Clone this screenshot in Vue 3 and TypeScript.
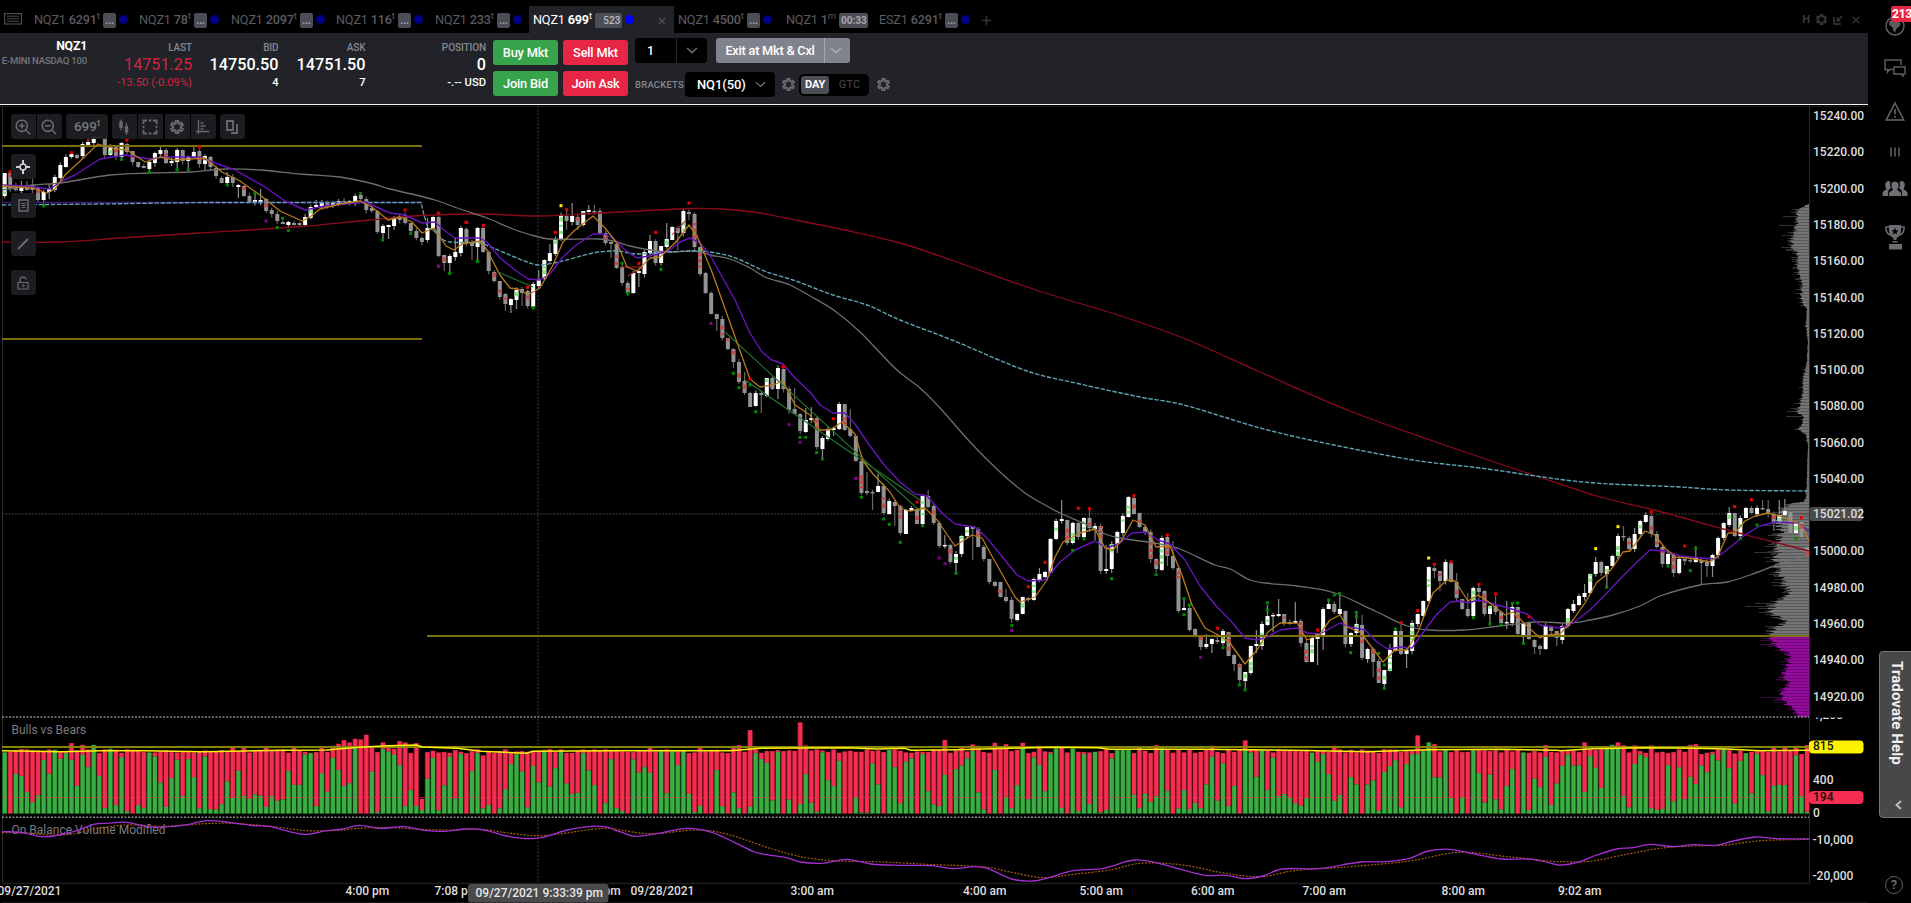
<script setup lang="ts">
type Pt = [number, number]
type Origin = { ox: number; oy: number; sx: number; sy: number }

const STEP = 5.563
const X0 = 4.7
const BASE = 813.5
const xAt = (i: number) => X0 + i * STEP

let seed = 20210928
const rnd = () => {
  seed = (seed * 1664525 + 1013904223) % 4294967296
  return seed / 4294967296
}

/* ---- tabs ---- */
interface Tab { sym: string; size: string; unit: string; badge: string; dot: boolean; width: number; active?: boolean }
const tabs: Tab[] = [
  { sym: 'NQZ1', size: '6291', unit: 't', badge: '...', dot: true, width: 105 },
  { sym: 'NQZ1', size: '78', unit: 't', badge: '...', dot: true, width: 92 },
  { sym: 'NQZ1', size: '2097', unit: 't', badge: '...', dot: true, width: 105 },
  { sym: 'NQZ1', size: '116', unit: 't', badge: '...', dot: true, width: 99 },
  { sym: 'NQZ1', size: '233', unit: 't', badge: '...', dot: true, width: 98 },
  { sym: 'NQZ1', size: '699', unit: 't', badge: '523', dot: true, width: 145, active: true },
  { sym: 'NQZ1', size: '4500', unit: 't', badge: '...', dot: true, width: 108 },
  { sym: 'NQZ1', size: '1', unit: 'm', badge: '00:33', dot: false, width: 93 },
  { sym: 'ESZ1', size: '6291', unit: 't', badge: '...', dot: true, width: 102 },
]

/* ---- candles: colour, body top . body bottom, ^high, _low ---- */
const candleText = `
w173.196 g173.189 g185.190 w187.191^181_193 g185.190^181 g185.190^175 g188.200_203 w192.200_205 w188.192^184_199 w177.190
w165.178 w157.167 w154.157 g155.158 w144.156 w142.146^139 w136.143 g136.138 g138.155 w146.155
g147.156 w143.157 g144.152 g151.162 g162.167 g166.168 w162.169_171 w153.163 w150.154^145 g150.163
w161.163^158_166 w150.162_168 g150.161 w157.161_168 w152.157^147 g151.164 w156.164_171 g157.167 g168.176 g178.183
w177.183^172_185 g177.183_187 w185.187_198 g186.196 g196.202 w200.202^193 w200.202^189 g199.211 g210.214 g214.221
g222.224 w222.225 g223.225 g223.225 w217.225 w207.218 w205.207^200 w203.207^200 g203.207 w203.206
w201.204^199 g201.203 w201.203 w196.202 g195.199 g199.210 g208.211 g211.232 w226.233_240 w225.227_239
w217.226 g216.220 g215.223 g223.231_234 g231.238 g238.242 w228.240^218 w217.229 g217.256 g255.263_271
w256.263_272 w252.257^237 w228.253 g229.243 g242.246_260 w228.247_260 g228.252 g252.271 g272.281 g281.297
g294.304_311 w299.305_313 w290.300_309 g289.293_306 g291.306 w284.307 w279.286^270 w260.279 w253.261^244 w239.254
w215.240 g216.221^210_230 w216.222^203 g217.225_230 w211.225 w210.212^205 g211.212^205 g211.233 g233.243 g242.244_258
g244.268 g267.283 g283.293 w273.293 w271.273_287 w252.274 w241.253^235 g241.263 w246.263 w239.247^223
w227.240 g228.233_250 w211.233 g212.214_220 g214.247 g247.274 g273.293 g293.314 g314.319_331 g319.338
g338.349 g349.362_368 g362.382 g381.393^372 g393.407 w393.406 g393.395_413 w378.396 g378.389 w368.389_399
g369.389 g389.410 g409.414^388 g414.431 w420.432^408 w418.420^407 g418.447 w438.449_459 w429.439 w428.430_436
w404.429 g404.430 g429.436^409 g436.461 g461.493 g491.493^472 g492.493_510 w486.492^474 g486.513 w501.514
g502.506_526 g506.533 w510.534 w508.511 g509.524 w496.524 g496.507^490 g506.523 g523.546 w545.546^535
g545.562 w554.563_572 w536.554 w527.536 g527.529_560 g529.547 g547.559 g559.582 g582.586 g582.597
g597.601^589 g600.619 w614.620 w597.614 g598.600 w579.600 w574.581^568 w572.577 w539.573 w521.539
w519.521^500 g520.543 w523.543 g523.537 w518.537 g518.528^510 w526.529_540 g526.571 w569.571^545 w544.569
w532.544_553 w516.533 w497.517 g498.514 g513.527 g527.532 g532.559 g559.569 w538.570 g537.556_566
g556.568^541 g568.611 w608.610^598 g608.630 g629.636 g636.647 w644.647^634 w639.644_653 g640.642^634 w631.643
g632.656 g655.664_671 g664.680 w672.681_689 w646.673 w644.646^630_653 w624.646 w616.625^605 w615.616_632 w614.616^599
g614.623 g622.624 w621.623^602 g621.643 g643.662 w638.662 w634.639_665 w609.636_650 w604.609^600 g604.612
w609.614^593 g611.644 w633.644 w624.633^612 g625.658^615 w649.659 g649.662_677 g661.683 w670.684_688 w650.671^644
w631.651 g631.654^624 w650.654_668 w623.651 w614.624 w601.616 w567.601 g568.571_578 g571.581_591 w562.581
g563.582 g582.598^573 g599.609 g609.616^593 w588.616 g588.592_602 g591.614 w606.614_623 g606.612^596 g612.623
w622.623^601_629 w607.623 g607.634 w623.635_643 g623.639 g640.647_654 g646.649_655 w626.649 g626.631 g631.638_646
w626.640_644 w609.626 w604.611^600 w596.605 w593.597^584 w574.593 w562.574^557 g562.573 w566.574_587 w556.566
w536.556 g536.537^526_541 g538.549 w534.549^528 w521.534 w515.522 g516.534 g534.547 g547.564 w554.564
g554.573_577 w559.573 g559.561_565 g560.561 w557.562^546 g560.563_585 g562.566_577 w555.566_577 w538.555 w523.538
w513.525^507 g513.536 w518.536 w508.518 g508.513 w508.514 g508.509^500 g509.514^500 g514.523_531 w515.523^500
w511.515^499 g512.533 w523.533 g522.537_544 g547.557`

const candles = candleText.trim().split(/\s+/).map((t, i) => {
  const m = t.match(/^([wg])(\d+)\.(\d+)(?:\^(\d+))?(?:_(\d+))?$/)!
  const top = +m[2]
  const bot = +m[3]
  const up = m[1] === 'w'
  const high = m[4] ? +m[4] : top - rnd() * 3
  const low = m[5] ? +m[5] : bot + rnd() * 4
  const tints: { y: number; h: number }[] = []
  if (bot - top > 7 && rnd() < 0.5) {
    const n = bot - top > 18 ? 2 + Math.round(rnd()) : 1
    let y = top + rnd() * (bot - top) * 0.6
    for (let k = 0; k < n; k++) {
      const h = 2 + rnd() * 2.5
      if (y + h < bot) tints.push({ y, h })
      y += h + 1 + rnd() * 3
    }
  }
  return { x: xAt(i), top, h: Math.max(1.4, bot - top), high, low, up, tints }
})

/* ---- bulls vs bears ---- */
const bulls = [
  183,0,119,113,65,34,55,161,119,191, 164,181,161,83,176,139,206,113,16,194, 25,169,7,0,25,16,183,171,93,20,
  106,161,53,163,109,15,171,13,12,28, 96,47,128,53,44,57,53,20,53,38, 42,127,86,86,176,181,22,121,65,167,
  130,83,91,196,0,0,126,4,193,186, 176,145,22,70,22,10,104,167,9,84, 170,45,178,0,127,181,15,26,0,15,
  73,148,178,126,18,143,93,188,81,136, 186,90,59,62,181,129,85,0,31,163, 16,7,0,162,123,139,122,0,187,61,
  187,145,190,59,4,23,0,0,130,22, 0,63,16,0,20,181,163,152,39,185, 0,42,0,28,118,32,5,183,100,82,
  158,0,0,49,3,2,150,87,0,190, 139,31,155,165,0,178,67,27,22,116, 0,133,144,165,188,63,12,0,131,0,
  50,16,85,196,43,168,146,67,180,195, 17,0,195,7,178,28,185,3,10,165, 190,190,190,56,16,59,35,52,195,68,
  0,15,70,14,32,16,87,170,38,150, 22,83,0,193,183,110,190,70,168,52, 58,49,31,23,46,182,155,178,118,38,
  56,0,109,87,0,87,99,8,125,142, 160,18,148,178,178,187,213,108,108,190, 47,0,49,0,190,121,33,117,42,12,
  82,133,0,183,11,105,79,170,26,90, 143,177,144,144,65,172,137,77,198,206, 202,53,18,149,177,169,16,11,13,145,
  36,138,43,110,88,144,124,178,159,193, 136,30,158,181,60,179,115,6,83,86, 85,0,174,52,5,
]
const totals: Record<number, number> = {
  12: 211, 14: 206, 41: 201, 43: 201, 47: 199, 52: 201, 57: 198, 59: 203, 60: 209, 61: 220, 62: 213, 63: 224, 64: 222,
  65: 236, 66: 198, 68: 213, 69: 201, 70: 194, 71: 217, 72: 213, 74: 211, 75: 44, 86: 174, 116: 200, 125: 200, 131: 200,
  132: 205, 134: 250, 143: 273, 144: 204, 169: 220, 172: 200, 174: 207, 175: 203, 178: 212, 180: 208, 183: 212, 186: 203,
  190: 201, 204: 200, 207: 205, 217: 203, 223: 219, 239: 203, 254: 234, 257: 208, 277: 205, 284: 213, 290: 213, 291: 205,
  293: 204, 296: 204, 300: 184, 303: 206, 304: 208, 305: 178, 306: 182, 311: 180, 316: 187, 317: 185, 318: 200, 320: 199,
  321: 190, 322: 200, 323: 178, 324: 205,
}
const bars = bulls.map((g, i) => {
  const t = totals[i] ?? Math.max(g, 181 + Math.round(rnd() * 12))
  return { x: xAt(i), green: g / 3, total: Math.max(g, t) / 3 }
})

/* ---- volume profile ---- */
const envelope: Pt[] = [
  [203, 0], [206, 5], [210, 11], [218, 12], [225, 13], [235, 15], [240, 18], [247, 18], [252, 13], [258, 11], [265, 13],
  [275, 9], [285, 7], [295, 8], [303, 7], [308, 2], [325, 3], [340, 1], [360, 2], [372, 4], [378, 6], [390, 6], [400, 8],
  [408, 10], [411, 13], [416, 6], [422, 6], [429, 10], [434, 3], [445, 1], [478, 2], [498, 3], [501, 6], [504, 22],
  [515, 31], [530, 29], [540, 31], [552, 33], [562, 34], [568, 33], [576, 29], [585, 25], [592, 19], [597, 28], [607, 40],
  [615, 34], [621, 21], [627, 34], [635, 43], [640, 38], [647, 31], [652, 22], [662, 21], [668, 23], [676, 28], [682, 22],
  [690, 24], [697, 32], [703, 24], [710, 16], [717, 10],
]
const spikes: Record<number, number> = { 216: 26, 225: 30, 247: 28, 411: 22, 416: 23, 552: 55, 603: 54, 606: 64, 644: 49, 697: 49 }
const widthAt = (y: number) => {
  for (let k = 1; k < envelope.length; k++) {
    if (y <= envelope[k][0]) {
      const [y0, w0] = envelope[k - 1]
      const [y1, w1] = envelope[k]
      return w0 + ((w1 - w0) * (y - y0)) / (y1 - y0)
    }
  }
  return 8
}
const profile = Array.from({ length: 514 }, (_, k) => {
  const y = 203 + k
  const w = widthAt(y) * (0.82 + rnd() * 0.3)
  const faint = spikes[y] ?? w + rnd() * rnd() * 14 * Math.min(1, w / 16)
  return { y, w, faint, dark: k % 3 === 1, purple: y >= 637 }
})

/* ---- lines ---- */
const P = (s: string): Pt[] => s.trim().split(/\s+/).map(p => p.split(',').map(Number) as Pt)
const place = (s: string, o: Origin): string => P(s).map(([x, y]) => `${(o.ox + x / o.sx).toFixed(1)},${(o.oy + y / o.sy).toFixed(1)}`).join(' ')
const smooth = (s: string): string => {
  const p = P(s)
  let d = `M${p[0][0]} ${p[0][1]}`
  const slope = (i: number) => {
    const a = p[Math.max(0, i - 1)]
    const b = p[Math.min(p.length - 1, i + 1)]
    return (b[1] - a[1]) / (b[0] - a[0])
  }
  for (let i = 0; i < p.length - 1; i++) {
    const [x0, y0] = p[i]
    const [x1, y1] = p[i + 1]
    const h = (x1 - x0) / 3
    d += `C${(x0 + h).toFixed(1)} ${(y0 + slope(i) * h).toFixed(1)} ${(x1 - h).toFixed(1)} ${(y1 - slope(i + 1) * h).toFixed(1)} ${x1} ${y1}`
  }
  return d
}
const LEFT: Origin = { ox: 0, oy: 700, sx: 2.45, sy: 3 }
const MID: Origin = { ox: 620, oy: 705, sx: 1.6333, sy: 3 }
const RIGHT: Origin = { ox: 1560, oy: 640, sx: 3, sy: 3 }

const redMa = smooth('2,242 60,242 120,238 200,233 300,226.5 370,220 420,215.5 480,214 540,216 600,213 640,211 690,208.5 720,209 760,213 800,221 840,229 900,243 951,260 1036,290 1121,316 1188,340 1260,372 1350,411 1430,440 1533,475 1600,497 1650,509 1680,517 1727,530 1770,541 1809,551')
const vwapLeft = '2,205 100,204 200,202.5 421,202.5 424,215 428,228'
const vwap = smooth('428,228 433,230 442,239 450,242 480,243 493,248 517,258 530,263 540,265 563,261 593,253 617,251 637,254 667,252 697,251 710,252 733,257 767,272 793,280 833,295 867,305 900,320 952,340 1027,371 1080,384 1140,397 1180,404 1227,418 1260,428 1310,440 1413,460 1480,468 1583,482 1680,487 1727,490 1809,491')
const greyMa = smooth('2,190 20,187 33,185 60,183 110,175 150,173 190,172 225,169 260,170 300,174 340,177 370,183 390,189 420,196 435,200 460,209 487,218 513,229 535,236 550,239 600,239 613,241 630,246 650,250 670,252 695,251 710,255 730,259 750,268 765,277 790,285 810,296 835,311 860,332 897,370 920,388 940,408 970,442 1000,472 1025,493 1045,505 1060,513 1085,524 1105,534 1120,538 1160,544 1180,549 1215,565 1230,569 1250,580 1265,583 1297,586 1335,593 1375,611 1407,626 1430,630 1463,630 1500,626 1537,622 1570,623 1590,620 1613,615 1640,606 1660,596 1700,585 1727,582 1750,575 1785,562 1809,556')
const purpleMa = '2,185 25,186 50,189 62,181 75,175 100,159 125,155 150,159 163,157 200,157 215,163 235,170 265,187 285,201 305,210 325,206 365,202 390,213 405,215 422,223 435,222 445,231 455,238 480,238 487,242 500,258 515,270 528,279 540,280 550,274 563,257 575,246 593,234 605,234 615,240 625,250 637,258 655,255 670,250 680,242 690,238 700,243 710,255 735,300 750,333 762,352 772,360 783,364 795,378 810,392 820,405 833,413 845,413 855,424 870,446 885,466 900,482 915,494 927,496 943,514 955,524 975,527 987,538 1000,554 1017,575 1028,581 1045,580 1060,562 1075,550 1095,541 1107,548 1120,543 1132,533 1145,532 1158,540 1170,544 1185,560 1200,586 1217,607 1230,620 1245,638 1257,640 1267,637 1280,630 1297,628 1307,633 1320,634 1340,623 1350,627 1365,630 1378,643 1388,649 1400,647 1412,648 1425,630 1437,614 1450,602 1460,601 1468,603 1478,600 1490,603 1505,607 1515,610 1527,614 1540,625 1560,628 1573,623 1590,610 1605,595 1623,576 1637,562 1650,550 1665,551 1680,556 1690,557 1715,559 1733,545 1745,535 1760,526 1775,522 1797,523 1809,531'
const orangeMa = '2,186 33,188 47,193 55,189 65,175 78,163 98,144 115,149 127,150 145,162 160,157 175,160 205,158 222,172 240,181 260,195 280,211 302,221 310,217 320,209 340,204 360,201 372,207 388,220 400,217 412,222 422,233 434,228 446,246 454,250 462,244 480,241 487,250 500,275 510,288 518,289 528,295 540,288 553,265 563,242 575,230 593,216 605,228 617,243 627,267 637,271 650,258 660,257 675,243 689,225 697,236 712,272 750,379 760,387 773,385 783,381 795,405 810,415 820,430 830,430 842,422 855,434 863,461 873,474 890,492 900,508 910,511 925,508 937,520 955,546 972,535 982,538 993,558 1015,597 1020,602 1035,597 1047,580 1055,557 1063,542 1080,533 1095,529 1105,548 1113,550 1122,540 1133,520 1145,525 1156,547 1170,546 1182,575 1192,605 1205,628 1220,636 1230,643 1245,664 1257,650 1268,632 1280,623 1297,623 1307,640 1320,634 1330,620 1340,615 1347,627 1360,632 1370,645 1383,662 1395,650 1407,650 1418,632 1433,593 1447,580 1455,581 1468,601 1478,595 1490,603 1505,615 1513,612 1527,626 1540,638 1547,635 1560,634 1573,620 1585,603 1597,582 1605,576 1613,567 1623,552 1630,551 1645,531 1655,535 1665,548 1675,557 1688,558 1700,560 1710,562 1718,556 1728,533 1735,533 1745,521 1755,516 1768,513 1780,516 1790,520 1797,523 1803,528 1809,541'

const obv = smooth([
  place('5,395 50,397 100,410 130,408 180,395 230,373 260,370 310,367 370,381 440,377 510,362 560,367 620,377 660,379 700,392 750,403 800,392 840,387 880,376 930,385 990,380 1040,391 1090,394 1140,387 1190,391 1240,408 1300,416 1340,409 1390,390 1450,379 1490,382 1510,392', LEFT),
  place('0,380 25,394 60,386 110,370 150,382 190,415 220,441 250,452 270,457 295,471 330,475 370,463 410,477 460,481 510,482 545,491 580,485 600,490 640,522 675,528 700,518 740,497 790,490 840,465 880,475 910,490 955,511 990,511 1020,521 1050,513 1080,492 1140,491 1210,471 1250,470 1290,460 1320,438 1355,433 1390,445 1440,462 1490,463 1532,480', MID),
  place('0,675 30,672 60,665 110,645 170,627 220,623 270,613 340,620 400,614 470,616 520,603 590,591 650,596 748,597', RIGHT),
].join(' '))
const obvAvg = smooth([
  place('5,398 60,398 120,405 180,402 240,385 310,375 400,379 500,371 560,370 620,374 680,381 750,392 830,391 890,384 960,383 1030,388 1100,390 1180,388 1240,398 1310,407 1370,402 1450,388 1500,385', LEFT),
  place('0,375 50,386 130,375 180,390 250,433 300,457 350,467 430,471 500,478 600,487 640,502 690,518 740,508 800,495 850,475 920,480 980,502 1045,515 1100,497 1180,487 1290,468 1370,442 1450,455 1528,470', MID),
  place('0,665 90,664 200,643 300,625 400,618 490,616 600,602 748,598', RIGHT),
].join(' '))
const volAvg = [
  place('5,152 150,155 250,152 350,152 500,155 600,153 700,151 800,150 880,142 950,137 1020,135 1035,141 1120,145 1180,154 1290,160 1305,154 1510,152', LEFT),
  place('0,137 180,137 230,130 370,128 420,132 465,130 475,136 550,134 700,127 780,128 800,133 950,133 1100,136 1220,140 1320,134 1440,133 1530,136', MID),
  place('0,332 100,326 250,323 400,325 500,327 600,332 748,331', RIGHT),
].join(' ')

/* ---- signal dots, stored per region in third-pixel units ---- */
const dotSets: { ox: number; oy: number; color: string; pts: string }[] = [
  { ox: 0, oy: 105, color: '#e00000', pts: '30,200 215,143 265,103 381,106 598,126 1215,315 1315,324 1398,352' },
  { ox: 0, oy: 105, color: '#008a00', pts: '131,303 365,163 448,202 531,194 565,194 682,240 832,368 865,377 1082,265 1148,405 1232,386 1348,505 1432,470 765,265 848,340' },
  { ox: 0, oy: 105, color: '#80008a', pts: '798,348 1315,483' },
  { ox: 0, oy: 105, color: '#5c5400', pts: '248,88' },
  { ox: 420, oy: 180, color: '#f00000', pts: '140,127 190,136 323,322 406,157 440,89 657,250 707,157 807,69 990,597 1090,560 1240,716' },
  { ox: 420, oy: 180, color: '#008a00', pts: '90,279 173,244 340,383 623,340 606,250 723,268 940,580 957,623 1007,695 990,615 1140,772 1157,772 1190,818 1207,837' },
  { ox: 420, oy: 180, color: '#80008a', pts: '56,259 873,430 1107,734 1140,787 1307,895' },
  { ox: 420, oy: 180, color: '#ffee00', pts: '423,77' },
  { ox: 780, oy: 340, color: '#f00000', pts: '411,486 745,740 795,667 895,505 928,506 1062,467 1162,585 1312,865' },
  { ox: 780, oy: 340, color: '#008a00', pts: '244,472 311,537 328,553 361,607 428,557 528,700 695,857 878,631 912,597 995,716 1128,704 1212,776 1228,795 1212,824 1329,923 1378,1035 1395,1050' },
  { ox: 780, oy: 340, color: '#80008a', pts: '228,415 478,654 495,671 695,871 1262,952' },
  { ox: 1200, oy: 440, color: '#f00000', pts: '352,570 603,548 653,512 703,373 753,366 837,433 887,462 987,530 1354,216' },
  { ox: 1200, oy: 440, color: '#008a00', pts: '202,488 202,510 386,480 403,465 419,460 452,638 469,517 469,530 586,567 536,640 553,675 553,745 820,533 870,552 903,555 970,610 1220,442 1404,378 937,490 953,489' },
  { ox: 1200, oy: 440, color: '#ffee00', pts: '686,354 1187,326 1254,260' },
  { ox: 1560, oy: 400, color: '#f00000', pts: '374,438 524,320 574,299 724,353' },
  { ox: 1560, oy: 400, color: '#008a00', pts: '391,512 407,445 541,416 591,375 708,415' },
]
const dots = dotSets.flatMap(s => P(s.pts).map(([x, y]) => ({ x: s.ox + x / 3 - 1.5, y: s.oy + y / 3 - 1.5, color: s.color })))

/* ---- axes ---- */
const prices = Array.from({ length: 17 }, (_, k) => 15240 - 20 * k)
  .map((p, k) => ({ label: p.toFixed(2), y: 116 + k * 36.27 }))
  .filter(p => p.label !== '15020.00')
const times = [
  { x: -2.5, t: '09/27/2021' }, { x: 345.5, t: '4:00 pm' }, { x: 434.5, t: '7:08 pm' }, { x: 577, t: '9:59 pm' },
  { x: 630.5, t: '09/28/2021' }, { x: 790.5, t: '3:00 am' }, { x: 963, t: '4:00 am' }, { x: 1079.5, t: '5:00 am' },
  { x: 1191, t: '6:00 am' }, { x: 1302.5, t: '7:00 am' }, { x: 1441.5, t: '8:00 am' }, { x: 1558, t: '9:02 am' },
]

/* cog outline with six teeth around (10, 10) */
const gear = (() => {
  const pts: string[] = []
  for (let k = 0; k < 6; k++) {
    const a = (k * Math.PI) / 3 - Math.PI / 2
    const at = (r: number, o: number) => `${(10 + r * Math.cos(a + o)).toFixed(2)} ${(10 + r * Math.sin(a + o)).toFixed(2)}`
    pts.push(at(5.6, -0.34), at(8.8, -0.2), at(8.8, 0.2), at(5.6, 0.34))
  }
  return `M${pts.join('L')}Z`
})()
</script>

<template>
  <div class="app">
    <div class="main">
      <nav class="tabs">
        <svg class="kbd" width="18" height="12" viewBox="0 0 18 12">
          <rect x=".6" y=".6" width="16.8" height="10.4" fill="none" stroke="#4a4b4f" stroke-width="1.2" />
          <path d="M3 3.3h12M3 5.7h12M3 8.3h12" stroke="#4a4b4f" stroke-width="1.1" />
        </svg>
        <div v-for="(t, i) in tabs" :key="i" class="tab" :class="{ active: t.active }" :style="{ width: t.width + 'px' }">
          <span class="name">{{ t.sym }} <b>{{ t.size }}</b><sup>{{ t.unit }}</sup></span>
          <span class="badge" :class="{ wide: t.active, clock: !t.dot }">{{ t.badge }}</span>
          <i v-if="t.dot" class="dot" />
          <svg v-if="t.active" class="close" width="8" height="8" viewBox="0 0 8 8"><path d="M.7.7l6.6 6.6M7.3.7L.7 7.3" stroke="#4c4d52" stroke-width="1.3" /></svg>
        </div>
        <svg class="plus" width="9" height="9" viewBox="0 0 9 9"><path d="M4.5 0v9M0 4.5h9" stroke="#333" stroke-width="1.6" /></svg>
        <div class="winctl">
          <b>H</b>
          <svg width="11" height="11" viewBox="0 0 20 20"><path :d="gear" fill="none" stroke="#3a3a3a" stroke-width="2.8" /></svg>
          <svg width="10" height="10" viewBox="0 0 10 10"><path d="M1 2v7h7M9 1L4.500 5.500M4.200 2.400v3.400h3.400" fill="none" stroke="#3a3a3a" stroke-width="1.400" /></svg>
          <svg width="8" height="8" viewBox="0 0 8 8"><path d="M.7.7l6.6 6.6M7.3.7L.7 7.3" stroke="#3a3a3a" stroke-width="1.3" /></svg>
        </div>
      </nav>

      <header class="header">
        <div class="quote c1"><b class="sym">NQZ1</b><span class="desc">E-MINI NASDAQ 100</span></div>
        <div class="quote c2 red"><span class="lbl">LAST</span><span class="big">14751.25</span><span class="sub">-13.50 (-0.09%)</span></div>
        <div class="quote c3"><span class="lbl">BID</span><span class="big">14750.50</span><span class="sub">4</span></div>
        <div class="quote c4"><span class="lbl">ASK</span><span class="big">14751.50</span><span class="sub">7</span></div>
        <div class="quote c5"><span class="lbl">POSITION</span><span class="big">0</span><span class="sub">-.-- USD</span></div>
        <div class="trade">
          <button class="buy">Buy Mkt</button><button class="sell">Sell Mkt</button>
          <button class="buy">Join Bid</button><button class="sell">Join Ask</button>
        </div>
        <div class="order">
          <div class="row">
            <div class="qty"><span>1</span><em><svg width="12" height="7" viewBox="0 0 12 7"><path d="M1 1l5 4.6L11 1" fill="none" stroke="#6b6c71" stroke-width="1.6" /></svg></em></div>
            <div class="exit"><span>Exit at Mkt &amp; Cxl</span><em><svg width="12" height="7" viewBox="0 0 12 7"><path d="M1 1l5 4.6L11 1" fill="none" stroke="#a9abb3" stroke-width="1.6" /></svg></em></div>
          </div>
          <div class="row second">
            <span class="brk">BRACKETS</span>
            <div class="sel">NQ1(50)<svg width="11" height="7" viewBox="0 0 12 7"><path d="M1 1l5 4.6L11 1" fill="none" stroke="#6b6c71" stroke-width="1.5" /></svg></div>
            <svg class="gear" width="13" height="13" viewBox="0 0 20 20"><path :d="gear" fill="none" stroke="#6b6d73" stroke-width="2.8" /></svg>
            <div class="tif"><b>DAY</b><span>GTC</span></div>
            <svg class="gear g2" width="13" height="13" viewBox="0 0 20 20"><path :d="gear" fill="none" stroke="#6b6d73" stroke-width="2.8" /></svg>
          </div>
        </div>
      </header>

      <section class="chart">
        <svg class="plot" width="1868" height="797" viewBox="0 106 1868 797">
          <defs>
            <clipPath id="below"><rect x="1809" y="717.6" width="60" height="6" /></clipPath>
            <clipPath id="plotclip"><rect x="2" y="106" width="1807" height="780" /></clipPath>
          </defs>
          <path d="M0 106.5H1868" stroke="#1b1b20" />
          <path d="M2.5 106V883M1809.5 106V883" stroke="#2b2b2b" fill="none" />
          <path d="M2 883.5H1810" stroke="#1e1e1e" stroke-width="1.6" />
          <path d="M2 902.5H1868" stroke="#161618" />

          <g clip-path="url(#plotclip)">
            <path d="M538 106V883" stroke="#262626" stroke-width="1.6" stroke-dasharray="2 1.5" />
            <g>
              <template v-for="(r, i) in profile" :key="i">
                <rect :x="1809 - r.faint" :y="r.y" :width="r.faint" height="1" :fill="r.purple ? '#3c0440' : '#303030'" />
                <rect :x="1809 - r.w" :y="r.y" :width="r.w" height="1" :fill="r.purple ? (r.dark ? '#6f0878' : '#940b9e') : (r.dark ? '#585858' : '#747474')" />
              </template>
            </g>
            <path d="M2 514H1809" stroke="#444" stroke-width="1.2" stroke-dasharray="2 1.3" />

            <g>
              <template v-for="(c, i) in candles" :key="i">
                <rect :x="c.x - 0.6" :y="c.high" width="1.2" :height="c.low - c.high" :fill="c.up ? '#8d8d8d' : '#666'" />
                <rect :x="c.x - 2" :y="c.top" width="4" :height="c.h" :fill="c.up ? '#fff' : '#929292'" />
                <rect v-for="(t, k) in c.tints" :key="k" :x="c.x - 2" :y="t.y" width="4" :height="t.h" :fill="c.up ? '#8be28b' : '#c04c4c'" />
              </template>
            </g>

            <g fill="none">
              <path d="M2 202.5H422" stroke="#3f1878" stroke-width="1.4" />
              <path :d="redMa" stroke="#8a0a1c" stroke-width="1.3" />
              <path :d="greyMa" stroke="#6e6e6e" stroke-width="1.3" />
              <polyline :points="vwapLeft" stroke="#5fa3b3" stroke-width="1.3" stroke-dasharray="4.5 1.6" />
              <path :d="vwap" stroke="#5fa3b3" stroke-width="1.4" stroke-dasharray="4.5 1.6" />
              <path d="M2 146H422M2 339H422M427 636H1809" stroke="#7a6f0c" stroke-width="2" />
              <path d="M498 272L533 287M725 332L920 511M745 380L920 500" stroke="#23732f" stroke-width="1.2" />
              <path d="M621 267H640M628 276L643 267M672 235L685 221" stroke="#b3202e" stroke-width="1.1" />
              <polyline :points="purpleMa" stroke="#6714bb" stroke-width="1.4" stroke-linejoin="round" />
              <polyline :points="orangeMa" stroke="#b87a1c" stroke-width="1.3" stroke-linejoin="round" />
            </g>
            <rect v-for="(d, i) in dots" :key="i" :x="d.x" :y="d.y" width="3" height="3" :fill="d.color" />

            <template v-for="(b, i) in bars" :key="i">
              <rect :x="b.x - 2.78" :y="BASE - b.total" width="5.57" :height="b.total - b.green" fill="#6e1524" />
              <rect :x="b.x - 2.78" :y="BASE - b.green" width="5.57" :height="b.green" fill="#134d19" />
              <rect :x="b.x - 2" :y="BASE - b.total" width="4" :height="b.total - b.green" fill="#f52d50" />
              <rect :x="b.x - 2" :y="BASE - b.green" width="4" :height="b.green" fill="#3cad42" />
            </template>
            <path d="M2 797.5H1809" stroke="#f52d50" stroke-opacity=".5" />
            <path d="M2 747H1809" stroke="#858500" stroke-width="2" />
            <polyline :points="volAvg" fill="none" stroke="#ffee10" stroke-width="1.5" />

            <path d="M2 717H1809M2 817.3H1809" stroke="#8a8a8a" stroke-width="1.5" stroke-dasharray="2 1.5" />
            <g class="ind"><text x="11.5" y="734">Bulls vs Bears</text><text x="11.5" y="834.3">On Balance Volume Modified</text></g>
            <path :d="obvAvg" fill="none" stroke="#a55a12" stroke-width="1.2" stroke-dasharray="2 1.4" />
            <path :d="obv" fill="none" stroke="#a52fd0" stroke-width="1.3" />
          </g>

          <g class="axis">
            <text v-for="p in prices" :key="p.label" x="1813" :y="p.y + 4.2">{{ p.label }}</text>
            <rect x="1809.5" y="507" width="53.5" height="14" rx="3" fill="#4a4a4c" />
            <text x="1813" y="517.6">15021.02</text>
            <text x="1813" y="719.2" clip-path="url(#below)">1,200</text>
            <text x="1813" y="784">400</text>
            <text x="1813" y="816.5">0</text>
            <path d="M1809 743q1-2.500 4-2.500h46.500a4 4 0 0 1 4 4v5a4 4 0 0 1-4 4h-46.500q-3 0-4-2.500z" fill="#fff200" />
            <text x="1813" y="750.3" class="dark">815</text>
            <path d="M1809 793.500q1-2.500 4-2.500h46.500a4 4 0 0 1 4 4v5a4 4 0 0 1-4 4h-46.500q-3 0-4-2.500z" fill="#f52d50" />
            <text x="1813" y="801" class="dark">194</text>
            <text x="1812.5" y="843.8">-10,000</text>
            <text x="1812.5" y="879.8">-20,000</text>
            <text v-for="t in times" :key="t.x" :x="t.x" y="895.4">{{ t.t }}</text>
            <rect x="468" y="884" width="140.5" height="18.5" rx="3" fill="#4a4a4c" />
            <text x="475.500" y="897" class="tip">09/27/2021 9:33:39 pm</text>
          </g>
        </svg>

        <div class="tools top">
          <div class="grp">
            <button><svg width="16" height="16" viewBox="0 0 16 16"><circle cx="6.8" cy="6.8" r="5.6" /><path d="M11 11l4.2 4.200M4 6.800h5.600M6.800 4v5.600" /></svg></button>
            <button><svg width="16" height="16" viewBox="0 0 16 16"><circle cx="6.8" cy="6.8" r="5.6" /><path d="M11 11l4.200 4.200M4 6.800h5.600" /></svg></button>
          </div>
          <div class="grp"><button class="txt">699<sup>t</sup></button></div>
          <div class="grp wide4">
            <button><svg width="16" height="16" viewBox="0 0 16 16"><path d="M5 .5v11M10.500 4v12" stroke-width="1.200" /><path d="M5 2.500v6.500M10.500 7v6.500" stroke-width="3.400" /></svg></button>
            <button><svg width="16" height="16" viewBox="0 0 16 16"><path d="M1.500 5V1.500H5M6.700 1.500h2.600M11 1.500h3.500V5M14.500 6.700v2.600M14.500 11v3.500H11M9.300 14.500H6.700M5 14.500H1.500V11M1.500 9.300V6.700" stroke-width="1.800" /></svg></button>
            <button><svg width="14" height="14" viewBox="0 0 20 20"><path :d="gear" stroke-width="3" /></svg></button>
            <button><svg width="14" height="14" viewBox="0 0 14 14"><path d="M2.500 0v14M0 11.500h13M4.500 3h3M4.500 6h5M4.500 8.800h3" stroke-width="1.300" /></svg></button>
          </div>
          <div class="grp"><button><svg width="14" height="14" viewBox="0 0 14 14"><path d="M2 1h6v9H2zM12 4v9H6" stroke-width="1.800" /></svg></button></div>
        </div>
        <div class="tools side">
          <button><svg width="14" height="14" viewBox="0 0 14 14" class="lit"><circle cx="7" cy="7" r="3" /><path d="M7 0v4M7 10v4M0 7h4M10 7h4" stroke-width="2" /></svg></button>
          <button><svg width="11" height="13" viewBox="0 0 11 13"><path d="M1 1h9v11H1z" stroke-width="1.500" /><path d="M3.500 4.500h4M3.500 6.500h4M3.500 8.500h4" stroke-width="1.100" /></svg></button>
          <button><svg width="12" height="12" viewBox="0 0 12 12"><path d="M1 11L11 1" stroke-width="1.900" /></svg></button>
          <button><svg width="12" height="14" viewBox="0 0 12 14"><path d="M1 6.500h10v6.500H1zM3 6V3.500C3 .3 9 .3 9 3.500M5.500 8.500l1.500 1-1 1.500" stroke-width="1.200" /></svg></button>
        </div>
      </section>
    </div>

    <aside class="rail">
      <svg class="globe" width="20" height="20" viewBox="0 0 20 20"><circle cx="10" cy="10" r="9" fill="none" stroke="#5c5d61" stroke-width="1.500" /><path d="M4 5.500l4-2 5 1 2.500 3-1 3-3 2-1.500 4-2-2-.5-3.500-3-1.500z" fill="#5c5d61" /></svg>
      <span class="count">213</span>
      <svg class="chat" width="22" height="18" viewBox="0 0 22 18"><path d="M9 10.500H5.500L3.500 13v-2.500H1V1h16v5M10 8h11v7h-2v2.200L17 15h-7z" fill="none" stroke="#5c5d61" stroke-width="1.500" /></svg>
      <svg class="warn" width="20" height="20" viewBox="0 0 20 20"><path d="M10 2l8.800 17H1.200z" fill="none" stroke="#66676b" stroke-width="1.500" /><path d="M10 8v5.500M10 15v1.800" stroke="#66676b" stroke-width="1.600" /></svg>
      <svg class="lines" width="10" height="10" viewBox="0 0 10 10"><path d="M1 .5v9M5 .5v9M9 .5v9" stroke="#66676b" stroke-width="1.400" /></svg>
      <svg class="people" width="26" height="17" viewBox="0 0 26 17" fill="#707175"><path d="M.500 16v-3q0-2 4-3.500-2-4.500-1-6.500 2-3.500 5-1-1 3 .5 6-3 2-3 4v4zM25.500 16v-3q0-2-4-3.500 2-4.500 1-6.500-2-3.500-5-1 1 3-.5 6 3 2 3 4v4z" /><path d="M6.500 16.500v-3q0-2 4-3.500-2-3-1.500-6.500 4-5 8 0Q17.500 7 15.500 10q4 1.500 4 3.500v3z" stroke="#000" stroke-width=".8" /></svg>
      <svg class="cup" width="20" height="26" viewBox="0 0 20 26"><path d="M4 1h12v6q-1 6-4.500 7v2h-3v-2Q5 13 4 7z" fill="#6b6c70" /><path d="M4 3H1q-.5 7 5 8M16 3h3q.5 7-5 8" fill="none" stroke="#6b6c70" stroke-width="1.500" /><path d="M10 3.800l1 2.400 2.600.2-2 1.700.7 2.500-2.300-1.400-2.300 1.400.7-2.500-2-1.700 2.600-.2z" fill="#000" /><path d="M7.500 17h5v1.500h-5zM4 20h13v5.500H4z" fill="#6b6c70" /></svg>
      <div class="help"><span>Tradovate Help</span><svg width="7" height="10" viewBox="0 0 7 10"><path d="M6 1L1.500 5 6 9" fill="none" stroke="#bbb" stroke-width="2" /></svg></div>
      <span class="q">?</span>
    </aside>
  </div>
</template>

<style>
html, body { background: #000; overflow: hidden; }
</style>

<style scoped>
.app { width: 1911px; height: 903px; display: flex; background: #000; font-family: Roboto, "Liberation Sans", sans-serif; color: #fff; overflow: hidden; }
.main { width: 1868px; flex: none; display: flex; flex-direction: column; }
.tabs { height: 27px; padding-top: 6px; display: flex; align-items: stretch; color: #5a5b60; }
.kbd { margin: 7px 0 0 4px; width: 18px; flex: none; }
.kbd + .tab { margin-left: 8px; }
.tab { box-sizing: border-box; flex: none; display: flex; align-items: center; padding-left: 4px; font-size: 12.7px; letter-spacing: -.2px; white-space: nowrap; }
.name { line-height: 27px; }
.name b { font-weight: 500; }
.name sup { font-size: 9.5px; line-height: 0; vertical-align: 5px; }
.badge { margin-left: 3.500px; width: 13px; height: 15px; margin-top: 2px; border-radius: 2px; background: #4b4e57; color: #a5a7ad; font: 700 10px/16px Roboto, sans-serif; text-align: center; letter-spacing: 0; flex: none; }
.wide { box-sizing: border-box; width: 27px; text-align: right; padding-right: 2px; line-height: 15px; font-weight: 500; color: #b9bbc1; }
.clock { width: 29px; line-height: 15px; }
.dot { width: 9px; height: 9px; border-radius: 50%; background: #000084; margin: -1px 0 0 3px; flex: none; }
.active { background: #222328; color: #fff; }
.active b { font-weight: 700; }
.active .dot { background: #0000fe; }
.close { margin: 3px 8px 0 auto; }
.plus { margin: 10px 0 0 5px; }
.winctl { margin-left: auto; display: flex; align-items: center; gap: 6px; padding-right: 8px; font-size: 11px; color: #3a3a3a; }
.winctl svg:last-child { margin-left: 3px; }

.header { height: 71px; background: #222328; border-bottom: 1px solid #f4f4f4; display: flex; }
.quote { display: flex; flex-direction: column; align-items: flex-end; padding-top: 6.500px; white-space: nowrap; flex: none; box-sizing: border-box; }
.c1 { width: 87px; } .c2 { width: 105px; } .c3 { width: 86.500px; } .c4 { width: 87px; } .c5 { width: 120.500px; }
.sym { font-size: 12.3px; line-height: 13px; font-weight: 700; letter-spacing: -.2px; }
.desc { font-size: 9.6px; line-height: 15px; color: #73757c; letter-spacing: -.2px; font-weight: 500; }
.lbl { font-size: 10px; line-height: 15px; color: #85878e; font-weight: 500; letter-spacing: -.1px; }
.big { font-size: 16.2px; line-height: 20px; font-weight: 500; }
.sub { font-size: 11.2px; line-height: 15px; font-weight: 500; }
.red .big, .red .sub { color: #d22340; font-weight: 400; }
.trade { display: grid; grid-template-columns: 65px 65px; grid-auto-rows: 25px; gap: 6px 5px; margin: 7px 0 0 7px; align-content: start; flex: none; }
button { border: 0; padding: 0; margin: 0; font-family: inherit; color: #fff; }
.trade button { border-radius: 3px; font-size: 12.8px; font-weight: 500; letter-spacing: -.2px; }
.buy { background: #37a34b; } .sell { background: #e72545; }
.order { margin: 5px 0 0 7px; display: flex; flex-direction: column; }
.row { display: flex; align-items: center; }
.qty { width: 72px; height: 25px; background: #000; border-radius: 4px; display: flex; font-size: 12.500px; font-weight: 500; }
.qty span { width: 42px; box-sizing: border-box; padding-left: 12px; line-height: 26px; border-right: 1px solid #26272c; }
em { flex: 1; display: flex; align-items: center; justify-content: center; }
.exit { margin-left: 9px; width: 134px; height: 25px; background: #80838d; border-radius: 3px; display: flex; font-size: 12.8px; line-height: 26px; font-weight: 500; letter-spacing: -.25px; }
.exit span { width: 108px; text-align: center; border-right: 1px solid #a3a6ae; white-space: nowrap; }
.exit em { justify-content: flex-start; padding-left: 5px; }
.second { margin-top: 9px; }
.brk { width: 50px; font-size: 9.500px; font-weight: 500; color: #85878e; letter-spacing: .2px; white-space: nowrap; }
.sel { width: 90px; height: 25px; box-sizing: border-box; background: #000; border-radius: 4px; padding: 0 9px 0 12px; display: flex; align-items: center; justify-content: space-between; font-size: 13px; font-weight: 500; letter-spacing: -.1px; }
.gear { margin-left: 6.500px; }
.tif { margin-left: 4.500px; width: 70px; height: 22px; box-sizing: border-box; background: #000; border-radius: 5px; padding: 2px; display: flex; font-size: 11px; line-height: 18px; }
.tif b { width: 31px; background: #4b4e57; border-radius: 3px; text-align: center; font-weight: 700; font-size: 11px; line-height: 17px; }
.tif span { width: 38px; padding-left: 3px; text-align: center; color: #4a4b50; letter-spacing: .2px; line-height: 17px; }
.g2 { margin-left: 7.500px; }

.chart { position: relative; margin-top: 1px; height: 797px; }
.plot { display: block; }
.axis { font-size: 12px; font-weight: 500; fill: #dedede; }
.axis .dark { fill: #111; }
.axis .tip { fill: #e6e6e6; }
.ind { font-size: 12px; fill: #7b7b7f; }
.tools { position: absolute; display: flex; }
.tools svg { fill: none; stroke: #707176; stroke-width: 1.6; }
.tools .lit { stroke: #dcdcdc; }
.tools button { width: 25px; height: 25px; display: flex; align-items: center; justify-content: center; background: #1e1f23; opacity: .94; padding-right: 1px; box-sizing: border-box; }
.top { left: 11px; top: 8px; gap: 4px; }
.grp { display: flex; gap: 1px; border-radius: 3px; overflow: hidden; }
.wide4 { gap: 1.300px; }
.grp .txt { width: 42px; display: block; font-size: 13.500px; font-weight: 500; color: #808186; line-height: 25px; padding: 0; }
.grp .txt sup { font-size: 9.500px; line-height: 0; vertical-align: 5px; }
.side { left: 11px; top: 48px; flex-direction: column; gap: 13.700px; }
.side button { border-radius: 3px; }

.rail { width: 43px; height: 903px; position: relative; display: flex; flex-direction: column; align-items: center; padding-left: 10px; box-sizing: border-box; flex: none; }
.rail svg { flex: none; }
.globe { margin-top: 16px; }
.chat { margin-top: 23px; }
.warn { margin-top: 24px; }
.lines { margin-top: 26px; }
.people { margin-top: 23px; }
.cup { margin-top: 27px; }
.count { position: absolute; left: 23px; top: 6px; width: 24px; height: 16px; background: #e72545; border-radius: 2px; font: 700 12px/16px Roboto, sans-serif; padding-left: 1px; letter-spacing: -.2px; }
.help { position: absolute; left: 10.500px; top: 651px; width: 34px; height: 167px; box-sizing: border-box; background: #48484a; border: 1px solid #77777a; border-radius: 4px 0 0 4px; }
.help span { position: absolute; left: 8px; top: 9px; writing-mode: vertical-rl; font: 700 15px/18px Roboto, sans-serif; letter-spacing: .1px; color: #f0f0f0; white-space: nowrap; }
.help svg { position: absolute; left: 15px; top: 148px; }
.q { position: absolute; left: 17px; top: 876px; width: 16px; height: 16px; border: 1.500px solid #606164; border-radius: 50%; font: 500 13px/16px Roboto, sans-serif; text-align: center; color: #707174; }
</style>
